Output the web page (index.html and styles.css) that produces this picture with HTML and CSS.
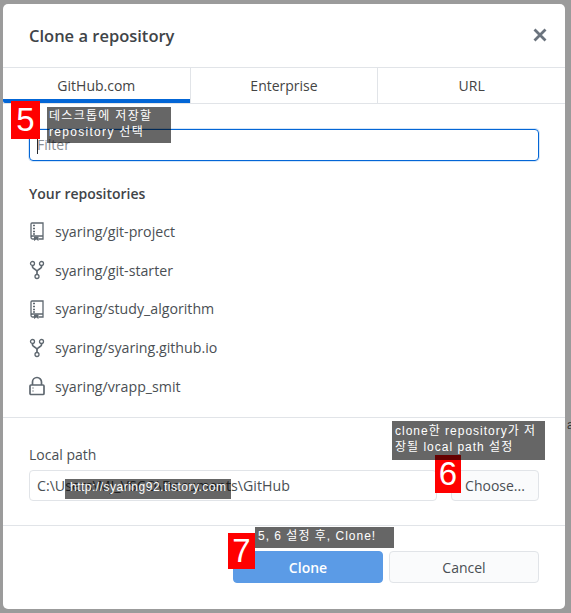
FILE: index.html
```html
<!DOCTYPE HTML>
<html>

<head>
  <meta charset="utf-8">
  <title>Clone a repository</title>
  <link rel="stylesheet" href="styles.css">
</head>

<body>
  <div class="dialog">
    <div class="head">
      <h1>Clone a repository</h1>
      <svg class="close" viewBox="0 0 14 14" width="14" height="14">
        <path d="M1.500 1.500l11 11M12.500 1.500l-11 11" />
      </svg>
    </div>

    <ul class="tabs">
      <li class="ac">GitHub.com</li>
      <li>Enterprise</li>
      <li>URL</li>
    </ul>

    <div class="repos">
      <div class="filter"><i class="caret"></i>Filter</div>
      <h2>Your repositories</h2>
      <ul class="list">
        <li>
          <svg viewBox="0 0 16 20" width="16" height="20">
            <path class="line" d="M2 16V3a1 1 0 0 1 1-1h11v13H3.500a1.500 1.500 0 0 0-1.500 1.500A1.500 1.500 0 0 0 3.500 18H5M9.500 18H14v-3" />
            <path class="solid" d="M5 15.500h4.500V20l-2.250-1.500L5 20z" />
            <path class="line" d="M4 4.500h2M4 7.500h2M4 10.500h2M4 13h2" />
          </svg>
          syaring/git-project
        </li>
        <li>
          <svg viewBox="0 0 16 20" width="16" height="20">
            <circle class="line" cx="3.500" cy="3.500" r="2" />
            <circle class="line" cx="12.500" cy="3.500" r="2" />
            <circle class="line" cx="8" cy="16.500" r="2" />
            <path class="line thick" d="M3.500 5.500V7c0 1.500 4.500 2.500 4.500 4.500V14.500M12.500 5.500V7c0 1.500-4.500 2.500-4.500 4.500" />
          </svg>
          syaring/git-starter
        </li>
        <li>
          <svg viewBox="0 0 16 20" width="16" height="20">
            <path class="line" d="M2 16V3a1 1 0 0 1 1-1h11v13H3.500a1.500 1.500 0 0 0-1.500 1.500A1.500 1.500 0 0 0 3.500 18H5M9.500 18H14v-3" />
            <path class="solid" d="M5 15.500h4.500V20l-2.250-1.500L5 20z" />
            <path class="line" d="M4 4.500h2M4 7.500h2M4 10.500h2M4 13h2" />
          </svg>
          syaring/study_algorithm
        </li>
        <li>
          <svg viewBox="0 0 16 20" width="16" height="20">
            <circle class="line" cx="3.500" cy="3.500" r="2" />
            <circle class="line" cx="12.500" cy="3.500" r="2" />
            <circle class="line" cx="8" cy="16.500" r="2" />
            <path class="line thick" d="M3.500 5.500V7c0 1.500 4.500 2.500 4.500 4.500V14.500M12.500 5.500V7c0 1.500-4.500 2.500-4.500 4.500" />
          </svg>
          syaring/syaring.github.io
        </li>
        <li>
          <svg viewBox="0 0 16 20" width="16" height="20">
            <path class="line thick" d="M3.500 9V6a4.500 4.500 0 0 1 9 0v3" />
            <rect class="line thick" x="1" y="9" width="14" height="9.500" rx="1" />
            <path class="line" d="M4 11.500v1M4 14.500v1" />
          </svg>
          syaring/vrapp_smit
        </li>
      </ul>
    </div>

    <div class="local">
      <label>Local path</label>
      <div class="path-row">
        <div class="path">C:\Users\MJ_VSCO\Documents\GitHub</div>
        <button class="btn choose">Choose...</button>
      </div>
    </div>

    <div class="foot">
      <button class="btn clone">Clone</button>
      <button class="btn">Cancel</button>
    </div>
  </div>

  <!-- blog annotations pasted over the screenshot -->
  <b class="num n5">5</b>
  <b class="num n6">6</b>
  <b class="num n7">7</b>
  <p class="note note5">데스크톱에 저장할<br>repository 선택</p>
  <p class="note note6">clone한 repository가 저<br>장될 local path 설정</p>
  <p class="note note7">5, 6 설정 후, Clone!</p>
  <p class="note url">http://syaring92.tistory.com</p>
  <span class="stray">a</span>
</body>

</html>
```

FILE: styles.css
```css
* {
  margin: 0;
  padding: 0;
  box-sizing: border-box;
}

html,
body {
  height: 613px;
  overflow: hidden;
}

body {
  background: #9b9b9b;
  font-family: "Open Sans", "Noto Sans", sans-serif;
  color: #24292e;
  position: relative;
}

li {
  list-style: none;
}

.dialog {
  width: 562px;
  height: 605px;
  margin: 4px 0 0 3px;
  background: #fff;
  border-radius: 5px;
  display: flex;
  flex-direction: column;
}

.head {
  height: 64px;
  flex: none;
  padding: 0 18px 1px 26px;
  display: flex;
  align-items: center;
  justify-content: space-between;
  border-bottom: 1px solid #e1e4e8;
}

.head h1 {
  font-size: 16.500px;
  font-weight: 600;
  color: #3f4448;
}

.close {
  fill: none;
  stroke: #6a737d;
  stroke-width: 2.800;
}

.tabs {
  display: flex;
  height: 36px;
  flex: none;
  border-bottom: 1px solid #e1e4e8;
}

.tabs li {
  flex: 1;
  text-align: center;
  font-size: 14px;
  line-height: 35px;
  color: #444;
  border-left: 1px solid #e1e4e8;
}

.tabs li.ac {
  border-left: 0;
  border-bottom: 4px solid #0366d6;
  height: 35px;
  border-radius: 0 0 0 2px;
}

.repos {
  height: 314px;
  flex: none;
  padding: 25px 26px 0;
  border-bottom: 1px solid #e1e4e8;
}

.filter {
  height: 32px;
  border: 1px solid #0366d6;
  border-radius: 4px;
  box-shadow: 0 0 0 1px #d5e6f8;
  padding-left: 7px;
  font-size: 14px;
  line-height: 30px;
  color: #8a8f94;
  position: relative;
}

.caret {
  position: absolute;
  left: 7px;
  top: 7px;
  width: 1px;
  height: 17px;
  background: #24292e;
}

.repos h2 {
  margin-top: 23px;
  font-size: 14px;
  line-height: 20px;
  font-weight: 600;
  color: #3f4448;
}

.list {
  margin-top: 8px;
}

.list li {
  height: 38.750px;
  display: flex;
  align-items: center;
  gap: 10px;
  font-size: 14.200px;
  color: #4a4f54;
}

.line {
  fill: none;
  stroke: #5f6870;
  stroke-width: 1.300;
}

.thick {
  stroke-width: 1.700;
}

.solid {
  fill: #5f6870;
}

.local {
  height: 108px;
  flex: none;
  padding: 27px 26px 0;
  border-bottom: 1px solid #e1e4e8;
}

.local label {
  display: block;
  font-size: 14px;
  line-height: 20px;
  color: #4a4f54;
}

.path-row {
  margin-top: 5px;
  display: flex;
  justify-content: space-between;
}

.path {
  width: 408px;
  height: 31px;
  border: 1px solid #e1e4e8;
  border-radius: 4px;
  padding-left: 7px;
  font-size: 14.200px;
  line-height: 30px;
  color: #4a4f54;
}

.btn {
  width: 150px;
  height: 32px;
  border: 1px solid #e1e4e8;
  border-radius: 4px;
  background: #fafbfc;
  font: 14px "Open Sans", "Noto Sans", sans-serif;
  color: #4a4f54;
}

.choose {
  width: 88px;
  height: 31px;
}

.foot {
  padding: 25px 26px 0 230px;
  display: flex;
  gap: 6px;
}

.clone {
  background: #5b9be6;
  border-color: #5b9be6;
  color: #fff;
  font-weight: 600;
}

/* annotations */
.num {
  position: absolute;
  background: #f00;
  color: #fff;
  font: 400 33px/1 "Liberation Sans", sans-serif;
  text-align: center;
}

.n5 {
  left: 11px;
  top: 101px;
  width: 29px;
  height: 38px;
  line-height: 38px;
}

.n6 {
  left: 435px;
  top: 455px;
  width: 26px;
  height: 38px;
  line-height: 38px;
}

.n7 {
  left: 228px;
  top: 533px;
  width: 27px;
  height: 36px;
  line-height: 36px;
}

.note {
  position: absolute;
  background: rgba(0, 0, 0, 0.6);
  color: #fff;
  font: 12px/16px "Liberation Sans", "Noto Sans CJK KR", sans-serif;
  letter-spacing: 1px;
  white-space: nowrap;
}

.note5 {
  left: 47px;
  top: 107px;
  width: 124px;
  height: 36px;
  padding: 1px 0 0 2px;
  letter-spacing: 1.300px;
}

.note6 {
  left: 392px;
  top: 421px;
  width: 153px;
  height: 39px;
  padding: 2px 0 0 3px;
}

.note7 {
  left: 255px;
  top: 527px;
  width: 139px;
  height: 21px;
  padding: 1px 0 0 3px;
}

.url {
  left: 65px;
  top: 479px;
  width: 166px;
  height: 20px;
  padding: 0 0 0 5px;
  letter-spacing: 0.500px;
}

.stray {
  position: absolute;
  left: 567px;
  top: 417px;
  font: 12px/16px "Liberation Sans", sans-serif;
  color: #333;
}
```
